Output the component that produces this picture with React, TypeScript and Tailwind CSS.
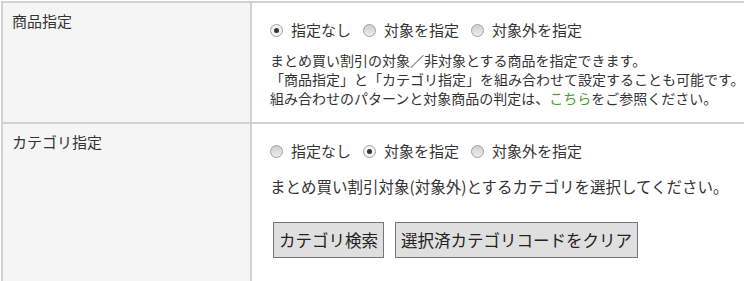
import React, { useState } from 'react'

type Choice = 'none' | 'include' | 'exclude'

const options: { value: Choice; label: string }[] = [
  { value: 'none', label: '指定なし' },
  { value: 'include', label: '対象を指定' },
  { value: 'exclude', label: '対象外を指定' },
]

function Radio({ checked, label, onClick }: { checked: boolean; label: string; onClick: () => void }) {
  return (
    <label className="flex items-center cursor-pointer mr-[12px]" onClick={onClick}>
      <span
        className={`w-[13px] h-[13px] rounded-full border border-[#a0a0a0] flex items-center justify-center ${
          checked ? 'bg-[#f2f2f2]' : 'bg-gradient-to-b from-[#cfcfcf] to-[#ededed]'
        }`}
      >
        {checked && <span className="w-[5px] h-[5px] rounded-full bg-[#333]" />}
      </span>
      <span className="ml-[8px] text-[15px] leading-[22px] text-[#333]">{label}</span>
    </label>
  )
}

function RadioGroup({ value, onChange }: { value: Choice; onChange: (v: Choice) => void }) {
  return (
    <div className="flex items-center">
      {options.map((o) => (
        <Radio key={o.value} checked={value === o.value} label={o.label} onClick={() => onChange(o.value)} />
      ))}
    </div>
  )
}

export default function App() {
  const [product, setProduct] = useState<Choice>('none')
  const [category, setCategory] = useState<Choice>('include')

  return (
    <div
      className="w-[744px] h-[281px] overflow-hidden bg-white pt-[1px] pl-[1px]"
      style={{ fontFamily: '"Noto Sans CJK JP", "Noto Sans", sans-serif' }}
    >
      <div className="w-[800px] border-t-2 border-l-2 border-[#d2d2d2] grid grid-cols-[249px_1fr]">
        {/* 商品指定 */}
        <div className="bg-[#f5f5f5] border-r-2 border-b-2 border-[#d2d2d2] pt-[7px] pl-[9px] text-[15px] leading-[22px] text-[#333]">
          商品指定
        </div>
        <div className="border-b-2 border-[#d2d2d2] pt-[16px] pl-[18px] pb-[14px] h-[121px]">
          <RadioGroup value={product} onChange={setProduct} />
          <div className="mt-[10px] text-[14px] leading-[19px] text-[#333] whitespace-nowrap">
            <p>まとめ買い割引の対象／非対象とする商品を指定できます。</p>
            <p>「商品指定」と「カテゴリ指定」を組み合わせて設定することも可能です。</p>
            <p>
              組み合わせのパターンと対象商品の判定は、
              <a href="#" className="text-[#4e9d2d]">
                こちら
              </a>
              をご参照ください。
            </p>
          </div>
        </div>

        {/* カテゴリ指定 */}
        <div className="bg-[#f5f5f5] border-r-2 border-[#d2d2d2] pt-[7px] pl-[9px] text-[15px] leading-[22px] text-[#333] h-[200px]">
          カテゴリ指定
        </div>
        <div className="pt-[16px] pl-[18px]">
          <RadioGroup value={category} onChange={setCategory} />
          <p className="mt-[13px] text-[15.5px] leading-[22px] text-[#333] whitespace-nowrap">
            まとめ買い割引対象(対象外)とするカテゴリを選択してください。
          </p>
          <div className="mt-[25px] ml-[3px] flex gap-[11px]">
            <button className="h-[36px] px-[5px] border border-[#767676] bg-[#dfdfdf] text-[16.5px] text-[#222] whitespace-nowrap">
              カテゴリ検索
            </button>
            <button className="h-[36px] px-[5px] border border-[#767676] bg-[#dfdfdf] text-[16.5px] text-[#222] whitespace-nowrap">
              選択済カテゴリコードをクリア
            </button>
          </div>
        </div>
      </div>
    </div>
  )
}
